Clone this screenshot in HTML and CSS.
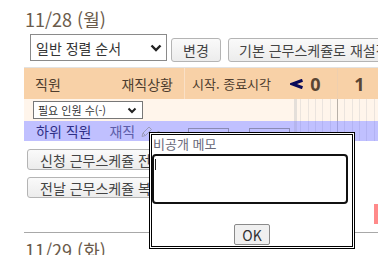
FILE: index.html
```html
<!DOCTYPE html>
<html lang="ko">
<head>
<meta charset="utf-8">
<link rel="stylesheet" href="styles.css">
</head>
<body>
<div class="page">
  <section class="day">
    <h2 class="date">11/28 (월)</h2>
    <div class="toolbar">
      <div class="select select-sort">
        <span>일반 정렬 순서</span>
        <svg class="chev" width="12" height="8" viewBox="0 0 12 8"><path d="M1.5 1.5 L6 6 L10.5 1.5" fill="none" stroke="#222" stroke-width="2.4"/></svg>
      </div>
      <button class="btn btn-change">변경</button>
      <button class="btn btn-reset">기본 근무스케쥴로 재설정</button>
    </div>
    <div class="table">
      <div class="row head">
        <div class="c-staff"><span>직원</span><span>재직상황</span></div>
        <div class="c-time"><span>시작. 종료시각</span>
          <svg class="arrow" width="13" height="10" viewBox="0 0 13 10"><path d="M12.5 1.3 L2.5 5 L12.5 8.7" fill="none" stroke="#0a0a5a" stroke-width="3.2" stroke-linejoin="miter"/></svg>
        </div>
        <div class="c-hour">0</div>
        <div class="c-hour">1</div>
        <div class="c-hour">2</div>
      </div>
      <div class="row need">
        <div class="c-staff">
          <div class="select select-need">
            <span>필요 인원 수(-)</span>
            <svg class="chev" width="10" height="7" viewBox="0 0 10 7"><path d="M1.5 1.5 L5 5 L8.5 1.5" fill="none" stroke="#222" stroke-width="2"/></svg>
          </div>
        </div>
        <div class="c-time"></div>
        <div class="c-hour first"></div>
        <div class="c-hour"></div>
        <div class="c-hour"></div>
      </div>
      <div class="row sub">
        <div class="c-staff">
          <span class="name">하위 직원</span>
          <span class="status">재직</span>
          <svg class="pencils" width="24" height="12" viewBox="0 0 24 12">
            <path d="M1 10.5 L2 7 L8 1 L10.5 3.5 L4.5 9.5 Z M2 7 L4.5 9.5" fill="none" stroke="#9a9ab8" stroke-width="1"/>
            <path d="M13 10.5 L17.5 5 L22 10.5" fill="none" stroke="#9a9ab8" stroke-width="1"/>
          </svg>
        </div>
        <div class="c-time">
          <span class="tbox"></span>
          <span class="tbox"></span>
        </div>
        <div class="c-hour first"></div>
        <div class="c-hour"></div>
        <div class="c-hour"></div>
      </div>
    </div>
    <div class="actions">
      <button class="btn btn-act">신청 근무스케쥴 전체 승인</button>
      <button class="btn btn-act">전날 근무스케쥴 복사</button>
    </div>
    <div class="marker-row"><span class="marker"></span></div>
  </section>
  <hr class="sep">
  <section class="day">
    <h2 class="date">11/29 (화)</h2>
  </section>

  <div class="popup">
    <div class="popup-label">비공개 메모</div>
    <div class="memo"><span class="caret"></span></div>
    <div class="popup-foot"><button class="btn btn-ok">OK</button></div>
  </div>
</div>
</body>
</html>
```
FILE: styles.css
```css
html, body {
  margin: 0;
  padding: 0;
  overflow: hidden;
  background: #fff;
}
body {
  font-family: "Noto Sans CJK KR", "Noto Sans", sans-serif;
  font-size: 13px;
  color: #333;
}
.page {
  position: relative;
  width: 378px;
  height: 255px;
  overflow: hidden;
  padding-left: 24px;
  box-sizing: border-box;
}
.day { width: 420px; }
.date {
  margin: 0;
  padding: 7px 0 0 1px;
  height: 25px;
  line-height: 25px;
  font-size: 18px;
  font-weight: normal;
  color: #6b5b4b;
  white-space: nowrap;
}
.toolbar {
  display: flex;
  align-items: flex-end;
  margin-top: 1px;
  height: 29px;
  padding-left: 6px;
}
.select {
  display: flex;
  align-items: center;
  justify-content: space-between;
  box-sizing: border-box;
  background: #fff;
  border: 1px solid #8a8a8a;
  white-space: nowrap;
}
.select-sort {
  width: 137px;
  height: 27px;
  padding: 0 4px 0 5px;
  font-size: 14px;
  color: #333;
  align-self: center;
}
.btn {
  font-family: "Noto Sans CJK KR", "Noto Sans", sans-serif;
  font-size: 14px;
  color: #444;
  background: linear-gradient(#fafafa, #ececec);
  border: 1px solid #b4b4b4;
  border-radius: 3px;
  box-sizing: border-box;
  white-space: nowrap;
  padding: 0 10px;
  line-height: 1;
  flex-shrink: 0;
}
.btn-change {
  margin-left: 4px;
  width: 50px;
  height: 24px;
}
.btn-reset {
  margin-left: 7px;
  height: 24px;
  padding: 0 10px;
}
.table {
  margin-top: 5px;
  border-top: 1px solid #e2e2e2;
  width: 420px;
}
.row {
  display: flex;
}
.c-staff {
  width: 161px;
  flex-shrink: 0;
  box-sizing: border-box;
  display: flex;
  align-items: center;
}
.c-time {
  width: 109px;
  flex-shrink: 0;
  box-sizing: border-box;
  display: flex;
  align-items: center;
}
.c-hour {
  width: 44px;
  flex-shrink: 0;
  box-sizing: border-box;
  display: flex;
  align-items: center;
  justify-content: center;
}
.head {
  height: 31px;
  background: #f8d1a7;
  color: #4e3d2e;
  font-size: 14px;
}
.head .c-staff {
  justify-content: space-between;
  padding: 0 11px 0 11px;
  border-right: 1px solid #fae0c6;
}
.head .c-time {
  padding-left: 7px;
  font-size: 13px;
}
.head .arrow {
  margin-left: auto;
  margin-right: -9px;
}
.head .c-hour {
  font-size: 18px;
  font-weight: bold;
  font-family: "Noto Sans", sans-serif;
  color: #5a4533;
  border-right: 1px solid #efcfae;
}
.need {
  height: 22px;
  background: #fff5eb;
}
.need .c-staff {
  padding-left: 9px;
}
.select-need {
  width: 110px;
  height: 18px;
  padding: 0 5px 0 4px;
  font-size: 11px;
  color: #333;
  border-color: #777;
}
.need .c-hour {
  border-right: 1px solid #b8b0a8;
  background: repeating-linear-gradient(to right, transparent 0 6.3px, #ebe4de 6.3px 7.33px);
}
.need .c-hour.first {
  box-shadow: inset 3px 0 #e4dfda;
}
.sub {
  height: 20px;
  background: #c0c0ff;
}
.sub .c-staff {
  padding-left: 12px;
  align-items: center;
}
.name {
  color: #2e2e86;
  font-size: 14px;
}
.status {
  color: #5d5da8;
  font-size: 14px;
  margin-left: 18px;
}
.pencils {
  margin-left: 6px;
  margin-top: 2px;
}
.sub .c-time {
  align-items: flex-start;
  padding-left: 3px;
  gap: 20px;
}
.tbox {
  display: block;
  width: 41px;
  height: 14px;
  margin-top: 7px;
  box-sizing: border-box;
  border: 1px solid #8a8ab4;
}
.sub .c-hour {
  border-right: 1px solid #9f9fdf;
  background: repeating-linear-gradient(to right, transparent 0 6.3px, #b3b3f3 6.3px 7.33px);
}
.sub .c-hour.first {
  box-shadow: inset 3px 0 #b5b5ee;
}
.actions {
  display: flex;
  flex-direction: column;
  align-items: flex-start;
  gap: 7px;
  margin-top: 8px;
  padding-left: 3px;
}
.btn-act {
  height: 21px;
  padding: 0 12px;
}
.marker-row {
  display: flex;
  justify-content: flex-end;
  margin-top: 6px;
  width: 354px;
  height: 20px;
}
.marker {
  display: block;
  width: 4px;
  height: 20px;
  background: #ff8a8a;
}
.sep {
  margin: 8px 0 0 0;
  border: 0;
  border-top: 1px solid #a8a8a8;
  width: 420px;
  height: 0;
}
.day + .sep + .day .date {
  padding-top: 5px;
}
.popup {
  position: absolute;
  left: 149px;
  top: 132px;
  width: 206px;
  height: 117px;
  box-sizing: border-box;
  border: 3px double #000;
  background: #fff;
  display: flex;
  flex-direction: column;
}
.popup-label {
  height: 19px;
  line-height: 18px;
  font-size: 13px;
  color: #6a6a7a;
  padding-left: 1px;
}
.memo {
  width: 196px;
  height: 50px;
  box-sizing: border-box;
  border: 2px solid #111;
  border-radius: 4px;
  padding: 3px 1px;
  background: #fff;
}
.caret {
  display: block;
  width: 1px;
  height: 11px;
  background: #222;
}
.popup-foot {
  display: flex;
  justify-content: center;
  margin-top: 20px;
}
.btn-ok {
  width: 36px;
  height: 21px;
  padding: 0;
  font-size: 14px;
  background: #f0f0f0;
  border: 1px solid #8a8a8a;
  border-radius: 2px;
  color: #333;
}
```
